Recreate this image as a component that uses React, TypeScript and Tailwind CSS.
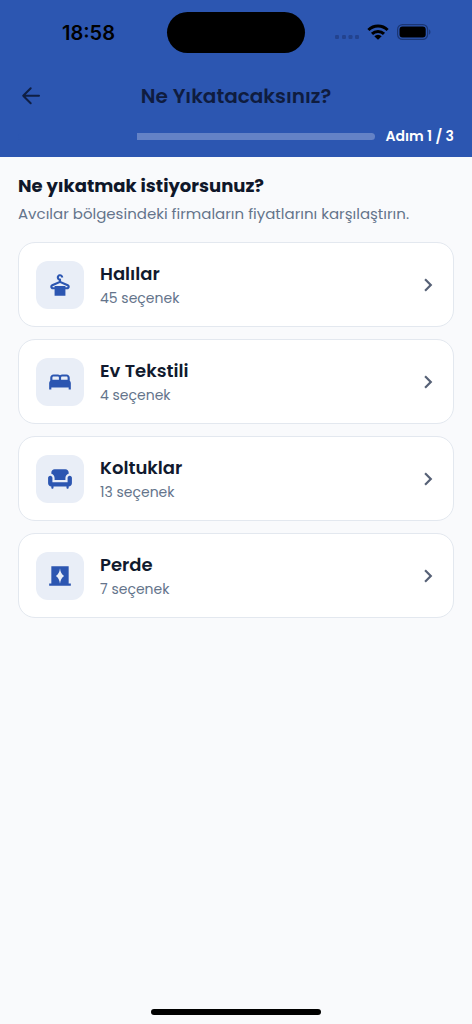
import type { IconType } from "react-icons";
import { MdBed, MdChair, MdChevronRight, MdCurtains, MdDryCleaning } from "react-icons/md";

type Category = {
  name: string;
  count: number;
  Icon: IconType;
};

const categories: Category[] = [
  { name: "Halılar", count: 45, Icon: MdDryCleaning },
  { name: "Ev Tekstili", count: 4, Icon: MdBed },
  { name: "Koltuklar", count: 13, Icon: MdChair },
  { name: "Perde", count: 7, Icon: MdCurtains },
];

const StatusBar = () => (
  <div className="grid grid-cols-[1fr_138px_1fr] items-center pt-3 text-black">
    <span className="pl-2.5 text-center font-['Inter',sans-serif] text-[20px] leading-6 font-semibold">
      18:58
    </span>
    <div className="h-[41px] rounded-full bg-black" />
    <div className="flex items-center justify-center pr-2.5 pb-0.5">
      {/* No cellular signal */}
      <svg width="26" height="20" viewBox="0 0 26 20" fill="#23438f">
        <rect x="0" y="13" width="4" height="4" rx="1.2" />
        <rect x="7" y="13" width="4" height="4" rx="1.2" />
        <rect x="13.5" y="13" width="4" height="4" rx="1.2" />
        <rect x="20" y="13" width="4" height="4" rx="1.2" />
      </svg>
      {/* Wi-Fi */}
      <svg className="ml-1.5" width="22" height="16" viewBox="0 0 22 16">
        <g fill="none" stroke="#000" strokeWidth="3">
          <path d="M1.4 6A13.6 13.6 0 0 1 20.6 6" />
          <path d="M5 9.9A8.6 8.6 0 0 1 17 9.9" />
        </g>
        <path d="M11 15.8 7.3 12.2A5.3 5.3 0 0 1 14.7 12.2Z" />
      </svg>
      {/* Battery */}
      <svg className="ml-2" width="35" height="16" viewBox="0 0 35 16">
        <rect x="0.6" y="0.6" width="30" height="14.8" rx="4.8" fill="none" stroke="#1b3674" strokeWidth="1.2" />
        <rect x="2.5" y="2.5" width="26.2" height="11" rx="3" />
        <path d="M32.2 5.5c1.6.5 1.6 4.5 0 5Z" fill="#1b3674" />
      </svg>
    </div>
  </div>
);

const Header = () => (
  <header className="bg-[#2c56b1]">
    <StatusBar />
    <div className="mt-[29px] grid grid-cols-[28px_1fr_28px] items-center px-[17px]">
      <button type="button" aria-label="Geri" className="cursor-pointer text-[#0f1f44]">
        <svg
          width="28"
          height="28"
          viewBox="0 0 28 28"
          fill="none"
          stroke="currentColor"
          strokeWidth="2"
          strokeLinecap="round"
          strokeLinejoin="round"
        >
          <path d="M22 13.7H6.2M13.7 6.2l-7.5 7.5 7.5 7.5" />
        </svg>
      </button>
      <h1 className="text-center text-[20px] leading-7 font-semibold text-[#0f1c3f]">
        Ne Yıkatacaksınız?
      </h1>
    </div>
    <div className="mt-4 flex items-center gap-2.5 px-[18px] pb-[11px]">
      <div
        role="progressbar"
        aria-label="Adım"
        aria-valuemin={0}
        aria-valuemax={3}
        aria-valuenow={1}
        className="flex h-[7px] flex-1"
      >
        <div className="w-1/3 rounded-l-full bg-[#2c56b1]" />
        <div className="flex-1 rounded-r-full bg-[#6482c6]" />
      </div>
      <span className="text-[14px] leading-5 font-semibold text-white">Adım 1 / 3</span>
    </div>
  </header>
);

const CategoryCard = ({ name, count, Icon }: Category) => (
  <li>
    <button
      type="button"
      className="flex w-full cursor-pointer items-center gap-4 rounded-[17px] border border-[#e3e8ef] bg-white p-[17px] text-left"
    >
      <span className="flex size-12 shrink-0 items-center justify-center rounded-xl bg-[#e9eef7] text-[#2c56b1]">
        <Icon size={26} />
      </span>
      <span className="flex flex-1 flex-col">
        <span className="text-[18px] leading-7 font-semibold text-[#111a2e]">{name}</span>
        <span className="text-[14px] leading-[21px] text-[#64748b]">{count} seçenek</span>
      </span>
      <MdChevronRight size={26} className="-mr-[5px] text-[#566176]" />
    </button>
  </li>
);

export default function App() {
  return (
    <div className="flex min-h-screen flex-col bg-[#f9fafc] font-['Poppins','Inter',sans-serif]">
      <Header />
      <main className="px-[18px] pt-[15px]">
        <h2 className="text-[18px] leading-7 font-bold text-[#0f172a]">Ne yıkatmak istiyorsunuz?</h2>
        <p className="text-[15px] leading-7 text-[#64748b]">
          Avcılar bölgesindeki firmaların fiyatlarını karşılaştırın.
        </p>
        <ul className="mt-3.5 flex flex-col gap-3">
          {categories.map((category) => (
            <CategoryCard key={category.name} {...category} />
          ))}
        </ul>
      </main>
      <div className="mx-auto mt-auto mb-[9px] h-1.5 w-[170px] rounded-full bg-black" />
    </div>
  );
}
